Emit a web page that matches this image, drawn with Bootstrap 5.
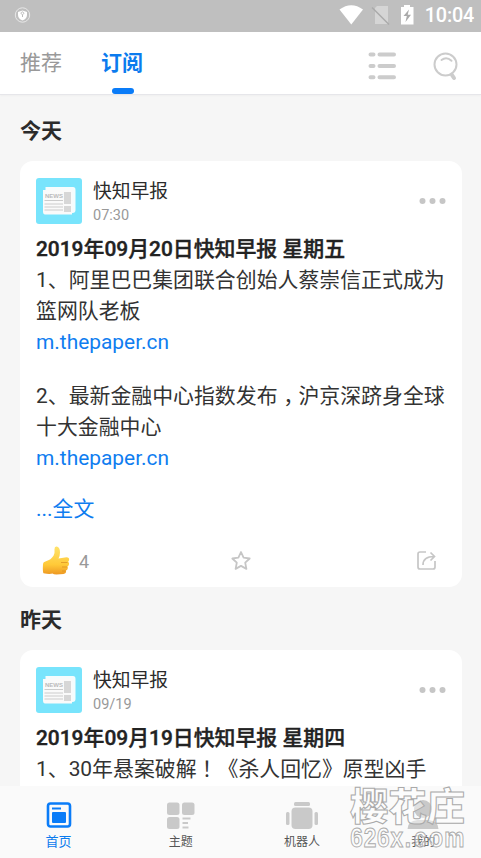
<!DOCTYPE html>
<html lang="zh-CN">
<head>
<meta charset="utf-8">
<meta name="viewport" content="width=device-width, initial-scale=1">
<title>订阅</title>
<link href="https://cdn.jsdelivr.net/npm/bootstrap@5.3.0/dist/css/bootstrap.min.css" rel="stylesheet">
<style>
body{font-family:Roboto,"Noto Sans CJK SC",sans-serif;background:#f6f6f6;color:#2b2b2b;height:858px;overflow:hidden}
svg{display:block;flex:none}
.status-bar{height:32px;background:#bfbfbf;color:#fff;padding:0 7px 0 14px}
.clock{font-size:19.8px;line-height:32px;font-weight:500;letter-spacing:-.2px}
.top-bar{height:63px;border-bottom:1px solid #e6e6ea;box-shadow:0 1px 2px rgba(0,0,20,.03);padding:0 22px 0 20px}
.tab-item{height:62px;font-size:21px;line-height:62px;color:#999}
.tab-item.active{color:#0b7bee;font-weight:700;margin-left:39px}
.tab-mark{width:22px;height:6px;border-radius:3px;background:#0a7cf8;bottom:0;left:11px}
.search-icon{margin-left:37px}
.feed{padding:0 19px 0 20px;height:691px}
.day-title{font-size:21px;font-weight:700;line-height:30px;margin:0;padding:21px 0 15px}
.day-title.later{padding:18px 0 15px}
.feed-card{background:#fff;border-radius:13px;padding:17px 16px 0}
.feed-card.first{height:426px}
.feed-card.second{height:200px}
.author-box{margin-left:11px;padding-top:1px}
.author{font-size:18.8px;line-height:26px}
.stamp{font-size:14.5px;line-height:22px;color:#999}
.post{font-size:20.9px;line-height:31px;white-space:nowrap;color:#333;padding-top:7px}
.post-title{font-size:20.9px;font-weight:500;-webkit-text-stroke:.4px #222;line-height:31px;color:#222;margin:0}
.post p{margin:0}
.post p.next{margin-top:23px}
.post p.rest{margin-top:20px}
.post a{color:#0f7df0;text-decoration:none}
.mid{display:inline-block;width:1em;text-indent:.27em}
.mid-mark{font-family:Roboto,"Noto Sans CJK TC",sans-serif}
.actions{margin-top:20px}
.likes{width:80px;color:#999;font-size:18px}
.thumb{margin:0 8px 0 6px}
.share{margin:0 10px 0 51px}
.bottom-bar{height:72px;background:#fafafa;padding-left:1px}
.nav-cell{width:121.3px;flex:none;font-size:12px;color:#555}
.nav-cell span{line-height:19px}
.nav-cell.active{width:115px;color:#0b7bee;font-size:13px}
.watermark{left:346px;top:782px}
</style>
<script src="https://cdn.jsdelivr.net/npm/bootstrap@5.3.0/dist/js/bootstrap.bundle.min.js"></script>
</head>
<body class="d-flex flex-column">
<header>
<div class="status-bar d-flex align-items-center">
<svg width="17" height="32" viewBox="0 0 17 32"><circle cx="8.5" cy="15" r="7.2" fill="none" stroke="#e8e8e8"/><path d="M8.5 10.5 13 12v3q0 3.5-4.5 5.500Q4 18.500 4 15v-3z" fill="#fff"/><path d="M8.500 17v-2m0-.5a1.300 1.300 0 1 0-.1 0" stroke="#bbb" fill="none"/></svg>
<svg class="ms-auto me-2" width="78" height="32" viewBox="0 0 78 32"><path d="M.5 9.500Q12.300 1 24 9.500L12.300 24.500z" fill="#fff"/><path d="M38 6h11v18H36V8z" fill="#d5d5d5"/><path d="m33 7.500 17 17" stroke="#aaa" stroke-width="1.500"/><path d="M62 7h3V5h6v2h3.500v17.500H62z" fill="#fff"/><path d="M70 9.500 64.500 16h3.300l-1.300 6 5.500-7.300h-3.300z" fill="#aaa"/></svg>
<span class="clock">10:04</span>
</div>
<nav class="top-bar d-flex bg-white align-items-start">
<div class="tab-item">推荐</div>
<div class="tab-item active position-relative">订阅<i class="tab-mark position-absolute"></i></div>
<svg class="ms-auto" width="28" height="62" viewBox="0 0 28 62"><g stroke="#ccc" stroke-width="4" stroke-linecap="round"><path d="M2.500 22.500h3m6 0h14.500M2.500 34h3m6 0h14.500M2.500 45.200h3m6 0h14.500"/></g></svg>
<svg class="search-icon" width="26" height="62" viewBox="0 0 26 62"><g fill="none" stroke="#ccc" stroke-linecap="round"><circle cx="12.500" cy="32.500" r="11" stroke-width="2"/><path d="M8.500 28q5-4 10 .8" stroke-width="2"/><path d="m19 43 2 3" stroke-width="4"/></g></svg>
</nav>
</header>
<main class="feed overflow-hidden">
<h2 class="day-title">今天</h2>
<article class="feed-card first">
<div class="d-flex">
<svg width="46" height="46" viewBox="0 0 46 46"><use href="#news"/></svg>
<div class="author-box"><div class="author">快知早报</div><div class="stamp">07:30</div></div>
<svg class="ms-auto" width="27" height="46" viewBox="0 0 27 46"><g fill="#c6c6c6"><circle cx="3.500" cy="23" r="3"/><circle cx="13.500" cy="23" r="3"/><circle cx="23.500" cy="23" r="3"/></g></svg>
</div>
<div class="post">
<h3 class="post-title">2019年09月20日快知早报 星期五</h3>
<p>1、阿里巴巴集团联合创始人蔡崇信正式成为<br>篮网队老板</p>
<p><a href="#">m.thepaper.cn</a></p>
<p class="next">2、最新金融中心指数发布<span class="mid">，</span>沪京深跻身全球<br>十大金融中心</p>
<p><a href="#">m.thepaper.cn</a></p>
<p class="rest"><a href="#">...全文</a></p>
</div>
<div class="actions d-flex align-items-center justify-content-between">
<div class="likes d-flex align-items-center">
<svg class="thumb" width="29" height="32" viewBox="0 0 29 32"><defs><linearGradient id="gold" x2="0" y2="1"><stop stop-color="#ffe36b"/><stop offset=".65" stop-color="#ffc938"/><stop offset="1" stop-color="#ed9722"/></linearGradient></defs><path d="M1 19q0-2 3-2.800 5-1.500 7.500-5.500 1.500-3 1-6.500 0-3 2-2.700 3.500.6 3.500 6 0 3-1.500 6l8-1.200q3 0 2.600 2.500-.2 1.500-1 2 1.500 1 .8 3-.4 1.300-1.400 1.700.8 1.300 0 2.800-.5 1-1.500 1.200.5 3-2.500 3.500l-7 .6q-3 0-4-1-3 1-9-.3Q.500 27 1 19z" fill="url(#gold)"/><path d="M19 17.500h6.500M20 22h5M20 26h3.500" stroke="#d98c20" stroke-width=".7"/></svg>4</div>
<svg width="20" height="32" viewBox="0 0 20 32"><path d="m10 7 2.600 5.700 6.100.8-4.500 4.200 1.200 6.200-5.400-3-5.400 3 1.200-6.200-4.500-4.200 6.100-.8z" fill="none" stroke="#c6c6c6" stroke-width="1.800" stroke-linejoin="round"/></svg>
<svg class="share" width="19" height="32" viewBox="0 0 19 32"><g fill="none" stroke="#c6c6c6" stroke-width="1.700"><path d="M9 7H3Q1 7 1 9v13q0 2 2 2h13q2 0 2-2v-6"/><path d="M6 20Q6 11.500 17 11.500M13.500 7.500l4 4-4 4"/></g></svg>
</div>
</article>
<h2 class="day-title later">昨天</h2>
<article class="feed-card second">
<div class="d-flex">
<svg width="46" height="46" viewBox="0 0 46 46"><g id="news"><rect width="46" height="46" rx="3" fill="#78e4fc"/><path d="M9.500 9H37q2.500 0 2.500 3v20q0 3-3 3H9.500z" fill="#f4fcfd"/><path d="M7 12h29v24.500H9q-2 0-2-3z" fill="#fafafa"/><path d="M28 14h7v12h-7zM28 28h7v6h-7z" fill="#d7d7d7"/><path d="M8.500 22.500H27M8.500 26H27M8.500 29H27M8.500 32H27" stroke="#ccc"/><text x="9" y="19.500" font-size="6" font-weight="700" fill="#bbb" font-family="Liberation Sans,sans-serif">NEWS</text></g></svg>
<div class="author-box"><div class="author">快知早报</div><div class="stamp">09/19</div></div>
<svg class="ms-auto" width="27" height="46" viewBox="0 0 27 46"><g fill="#c6c6c6"><circle cx="3.500" cy="23" r="3"/><circle cx="13.500" cy="23" r="3"/><circle cx="23.500" cy="23" r="3"/></g></svg>
</div>
<div class="post">
<h3 class="post-title">2019年09月19日快知早报 星期四</h3>
<p>1、30年悬案破解<span class="mid-mark" lang="zh-TW">！</span>《杀人回忆》原型凶手</p>
</div>
</article>
</main>
<footer class="bottom-bar d-flex">
<div class="nav-cell active d-flex flex-column align-items-center"><svg width="26" height="46" viewBox="0 0 26 46"><rect x="2" y="17.500" width="22" height="23" rx="2.500" fill="none" stroke="#0a7cf8" stroke-width="2.600"/><path d="M6 22.500h9" stroke="#0a7cf8" stroke-width="2"/><rect x="6" y="26" width="14" height="11" rx="1" fill="#0a7cf8"/></svg><span>首页</span></div>
<div class="nav-cell d-flex flex-column align-items-center ms-1"><svg width="28" height="47" viewBox="0 0 28 47"><g fill="#c9c9c9"><rect y="16.500" width="12.500" height="12.500" rx="2.500"/><rect x="15" y="16.500" width="12.500" height="12.500" rx="2.500"/><rect y="31" width="12.500" height="12" rx="2.500"/><path d="M15.500 31.500h8v2h-8zM15.500 36h5.500v2h-5.500zM15.500 40.500h6v2h-6z"/></g></svg><span>主题</span></div>
<div class="nav-cell d-flex flex-column align-items-center"><svg width="34" height="47" viewBox="0 0 34 47"><g fill="#c9c9c9"><rect x="9" y="16" width="16" height="4" rx="1.500"/><rect x="6.500" y="21.500" width="21" height="21.500" rx="4"/><rect x="1" y="26" width="3.500" height="13" rx="1.500"/><rect x="29.500" y="26" width="3.500" height="13" rx="1.500"/></g></svg><span>机器人</span></div>
<div class="nav-cell d-flex flex-column align-items-center"><svg width="34" height="47" viewBox="0 0 34 47"><g fill="#c9c9c9"><circle cx="17" cy="23" r="9"/><path d="M1.500 43q0-8 10-9h11q10 1 10 9z"/></g></svg><span>我的</span></div>
</footer>
<svg class="watermark position-absolute" width="135" height="76" viewBox="0 0 135 76"><g fill="#fff" fill-opacity=".45" stroke="#aaa" stroke-width="1" font-weight="900" font-family="'Noto Sans CJK SC',sans-serif"><text x="4" y="38" font-size="38" textLength="115" lengthAdjust="spacingAndGlyphs">樱花庄</text><text transform="scale(.84 1)" x="5 21 37 53 70 81 99 117" y="65" font-size="27" font-family="'Liberation Sans',sans-serif" font-weight="700">626x.com</text></g></svg>
</body>
</html>
